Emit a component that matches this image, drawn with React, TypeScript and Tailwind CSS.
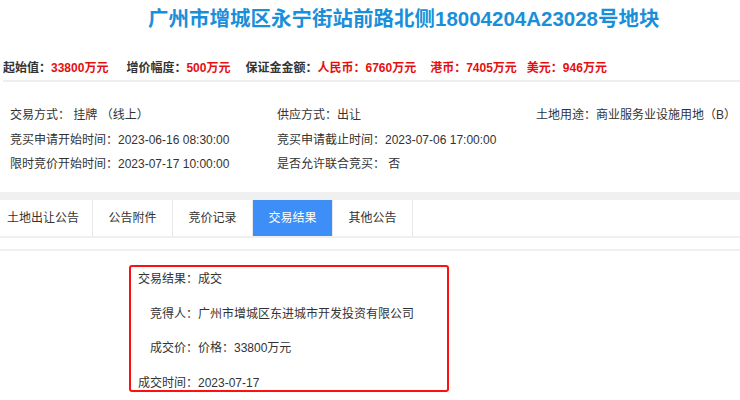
import React from 'react'

const font = { fontFamily: '"Liberation Sans", "Noto Sans CJK SC", sans-serif' }

const tabs = ['土地出让公告', '公告附件', '竞价记录', '交易结果', '其他公告']

const results = [
  { label: '交易结果：', value: '成交' },
  { label: '竞得人：', value: '广州市增城区东进城市开发投资有限公司' },
  { label: '成交价：', value: '价格：33800万元' },
  { label: '成交时间：', value: '2023-07-17' },
]

export default function App() {
  return (
    <div className="w-[740px] h-[400px] overflow-hidden bg-white text-[#333]" style={font}>
      {/* title */}
      <div className="h-[58px] pt-[6px] pl-[148px]">
        <h1 className="text-[20.5px] leading-[26px] font-bold text-[#1a8fd9] whitespace-nowrap">
          广州市增城区永宁街站前路北侧18004204A23028号地块
        </h1>
      </div>

      {/* price row */}
      <div className="ml-[3px] h-[22px] flex items-start text-[12px] leading-[20px] font-bold whitespace-nowrap">
        <span>起始值：</span>
        <span className="text-[#e50f0f]">33800万元</span>
        <span className="ml-[18px]">增价幅度：</span>
        <span className="text-[#e50f0f]">500万元</span>
        <span className="ml-[15px]">保证金金额：</span>
        <span className="text-[#e50f0f]">人民币：6760万元</span>
        <span className="ml-[14px] text-[#e50f0f]">港币：7405万元</span>
        <span className="ml-[10px] text-[#e50f0f]">美元：946万元</span>
      </div>
      <div className="ml-[3px] h-[2px] bg-[#eeeeee]" />

      {/* info */}
      <div className="pt-[21px] h-[110px] text-[12px] leading-[24.5px]">
        <div className="flex">
          <div className="w-[277px] pl-[10px]">交易方式：&nbsp;挂牌 （线上）</div>
          <div className="flex-1">供应方式：出让</div>
          <div className="pr-[4px]">土地用途：商业服务业设施用地（B）</div>
        </div>
        <div className="flex">
          <div className="w-[277px] pl-[10px]">竞买申请开始时间：2023-06-16 08:30:00</div>
          <div className="flex-1">竞买申请截止时间：2023-07-06 17:00:00</div>
        </div>
        <div className="flex">
          <div className="w-[277px] pl-[10px]">限时竞价开始时间：2023-07-17 10:00:00</div>
          <div className="flex-1">是否允许联合竞买：&nbsp;否</div>
        </div>
      </div>

      {/* gray band */}
      <div className="h-[8px] bg-[#f0f0f0]" />

      {/* tabs */}
      <div className="flex h-[38px] border-b-2 border-[#f0f0f2] text-[12px]">
        {tabs.map((t, i) => (
          <div
            key={t}
            className={
              (i === 0 ? 'w-[93px] pl-[7px] justify-start ' : 'w-[80px] justify-center ') +
              'flex items-center border-r border-[#e8e8ec] ' +
              (i === 3 ? 'bg-[#3d8ef7] text-white' : '')
            }
          >
            {t}
          </div>
        ))}
      </div>
      <div className="h-[11px]" />
      <div className="h-[2px] bg-[#f0f0f2]" />

      {/* result box */}
      <div className="pt-[14px] pl-[129px]">
        <div className="w-[320px] h-[127px] pt-[3px] border-2 border-[#ff1010] rounded-[3px] flex flex-col gap-[16.5px] text-[12px] leading-[18px]">
          {results.map((r) => (
            <div key={r.label} className="flex">
              <div className="w-[67px] text-right">{r.label}</div>
              <div>{r.value}</div>
            </div>
          ))}
        </div>
      </div>
    </div>
  )
}
